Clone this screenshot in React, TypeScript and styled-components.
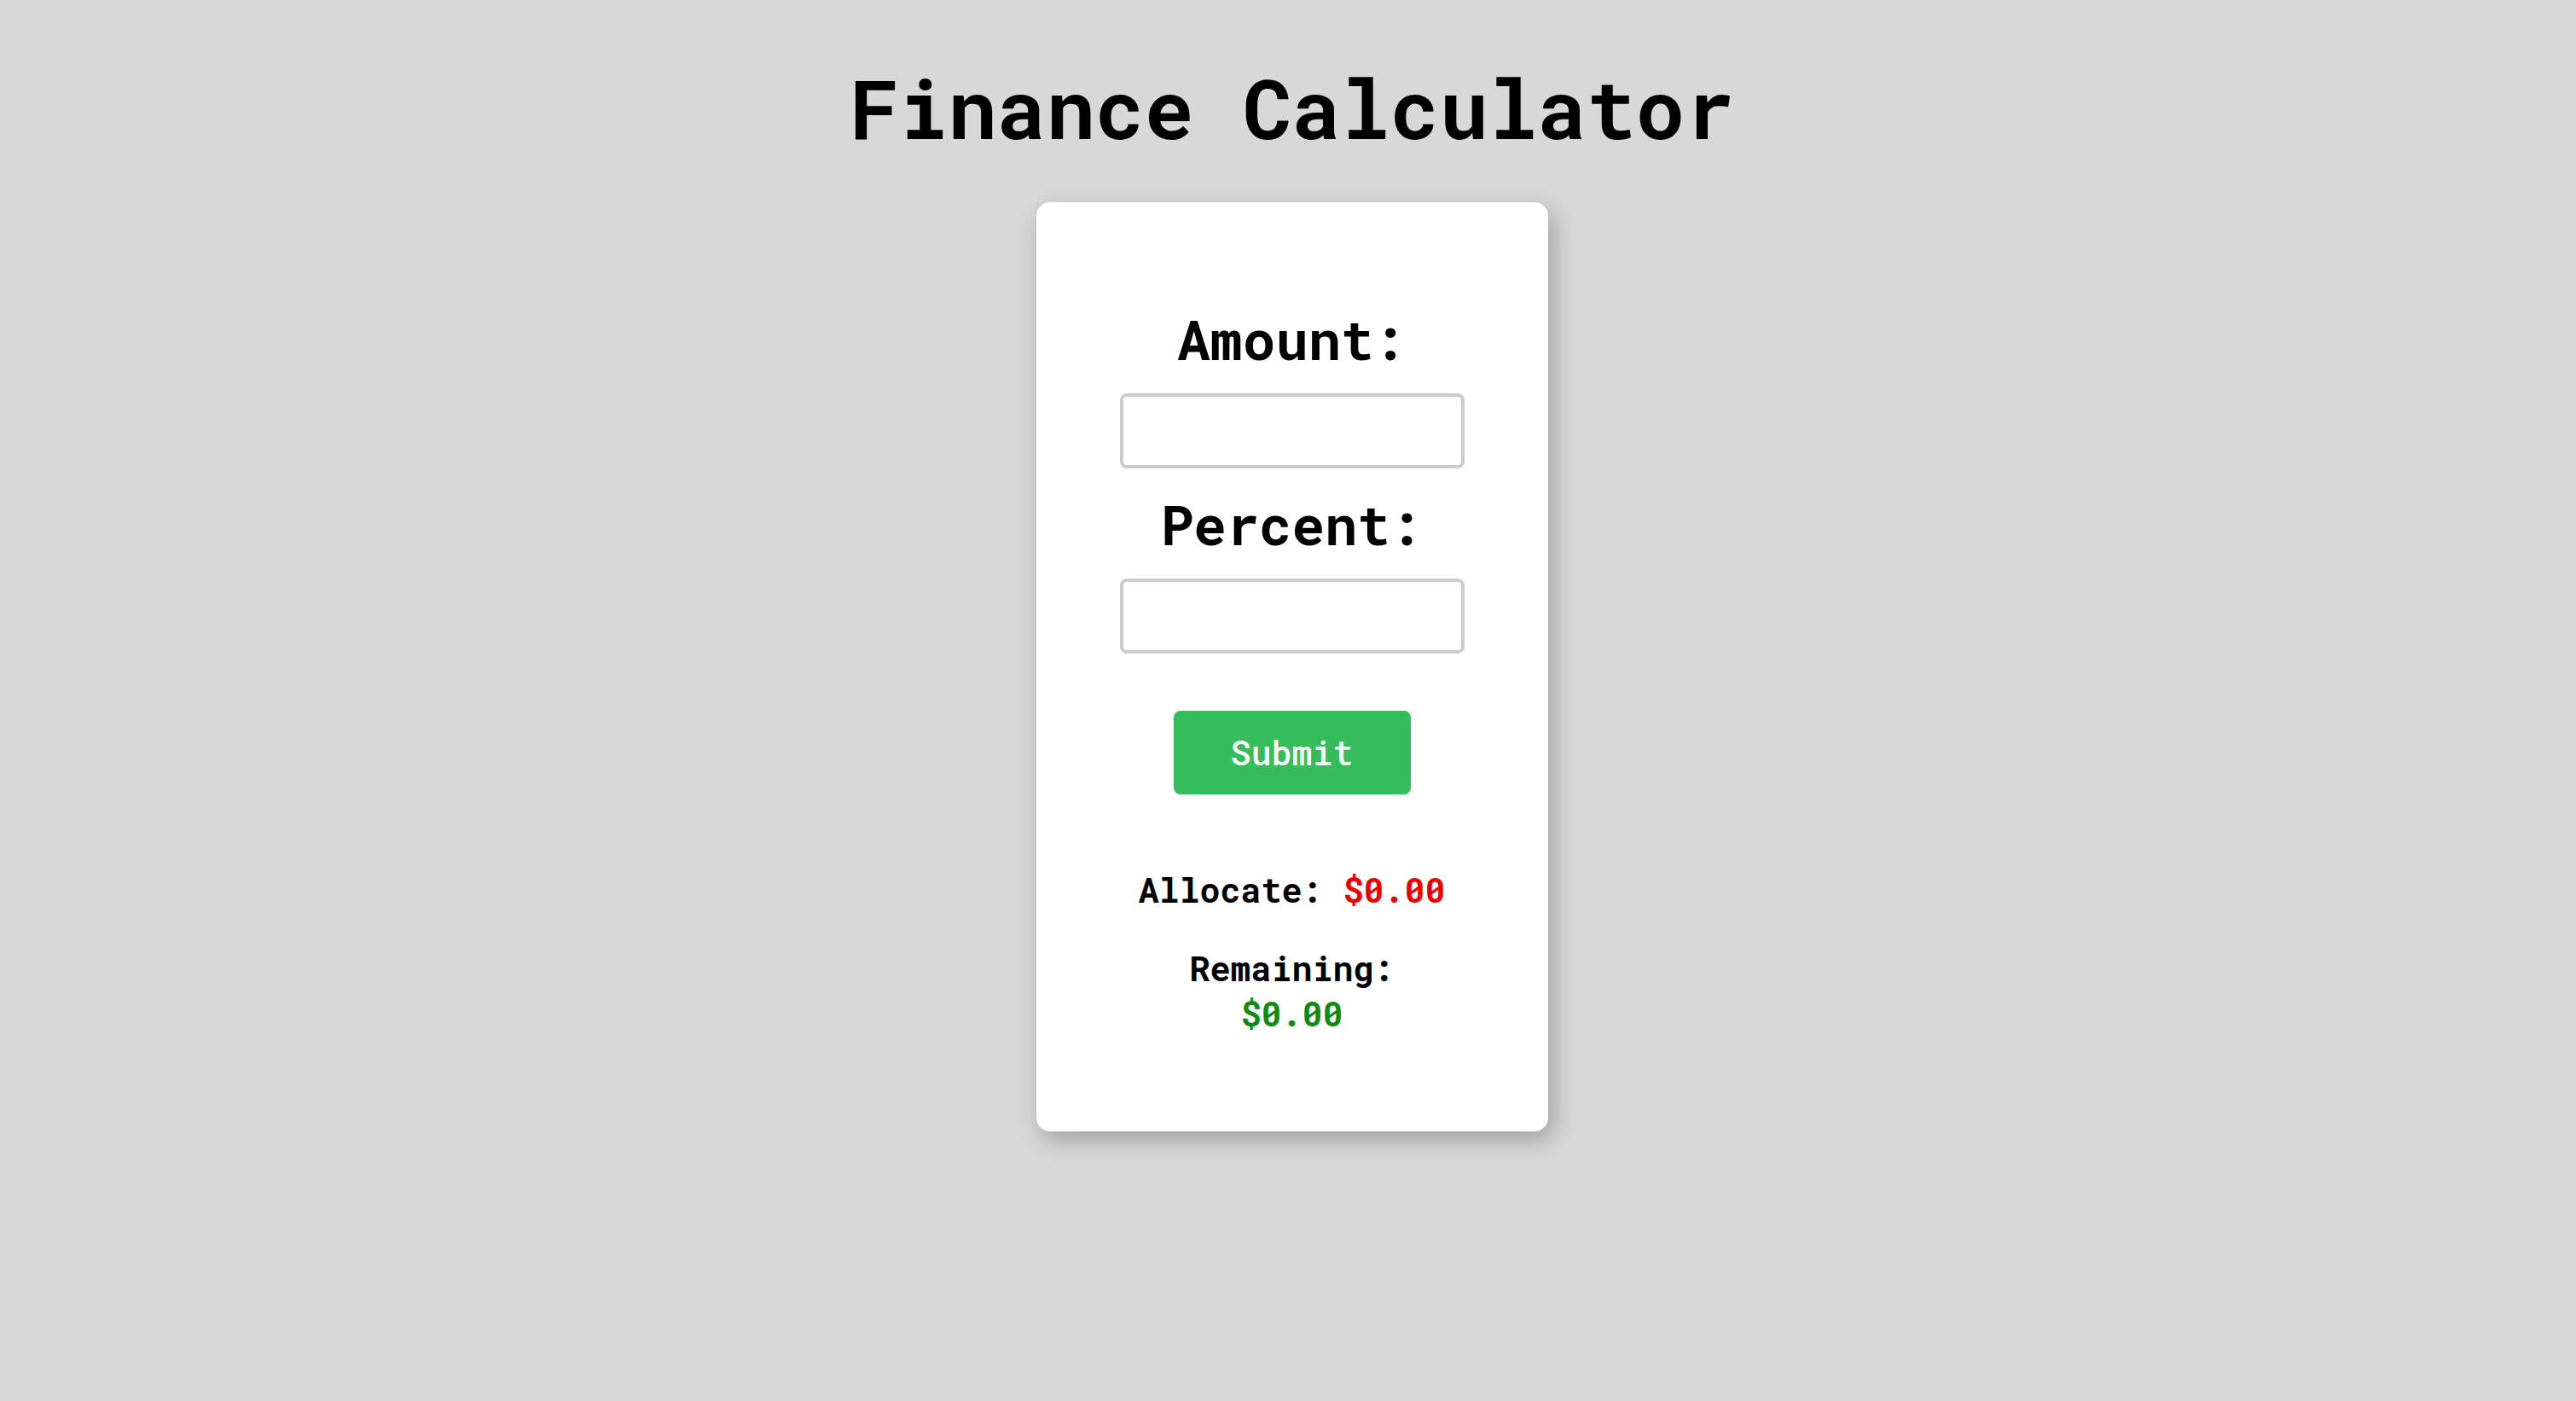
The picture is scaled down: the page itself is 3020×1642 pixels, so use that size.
import React, { useState } from "react";
import styled, { createGlobalStyle } from "styled-components";

const GlobalStyle = createGlobalStyle`
  html, body {
    margin: 0;
    padding: 0;
    background: #d8d8d8;
  }
  body {
    font-family: "Roboto Mono", "DejaVu Sans Mono", "Liberation Mono", monospace;
    color: #000;
  }
  * { box-sizing: border-box; }
`;

const Page = styled.main`
  min-height: 1642px;
  display: flex;
  flex-direction: column;
  align-items: center;
  padding: 68px 0 0 9px;
`;

const Title = styled.h1`
  margin: 0;
  font-size: 96px;
  line-height: 115px;
  font-weight: 700;
`;

const Card = styled.form`
  margin-top: 54px;
  width: 600px;
  padding: 122px 0 112px;
  background: #ffffff;
  border-radius: 16px;
  box-shadow: 6px 10px 28px rgba(0, 0, 0, 0.26);
  display: flex;
  flex-direction: column;
  align-items: center;
`;

const Label = styled.label<{ $gap?: number }>`
  margin-top: ${(p) => p.$gap ?? 0}px;
  font-size: 64px;
  line-height: 76.8px;
  font-weight: 700;
`;

const Input = styled.input`
  margin-top: 25px;
  width: 404px;
  height: 88px;
  border: 4px solid #cccccc;
  border-radius: 8px;
  background: #fff;
  font-family: inherit;
  font-size: 36px;
  padding: 0 16px;
  outline: none;
`;

const SubmitButton = styled.button`
  margin-top: 67px;
  width: 278px;
  height: 98px;
  border: none;
  border-radius: 8px;
  background: #34bd5a;
  color: #ffffff;
  font-family: inherit;
  font-size: 40px;
  font-weight: 500;
  cursor: pointer;
`;

const Result = styled.p<{ $gap: number }>`
  margin: ${(p) => p.$gap}px 0 0;
  max-width: 372px;
  text-align: center;
  font-size: 40px;
  line-height: normal;
  font-weight: 700;
`;

const Money = styled.span<{ $tone: "red" | "green" }>`
  color: ${(p) => (p.$tone === "red" ? "#ee0000" : "#108a10")};
`;

const fmt = (n: number) => `$${(isFinite(n) ? n : 0).toFixed(2)}`;

export default function App() {
  const [amount, setAmount] = useState("");
  const [percent, setPercent] = useState("");
  const [allocate, setAllocate] = useState(0);
  const [remaining, setRemaining] = useState(0);

  const onSubmit = (e: React.FormEvent) => {
    e.preventDefault();
    const a = parseFloat(amount) || 0;
    const p = parseFloat(percent) || 0;
    const alloc = (a * p) / 100;
    setAllocate(alloc);
    setRemaining(a - alloc);
  };

  return (
    <>
      <GlobalStyle />
      <Page>
        <Title>Finance Calculator</Title>
        <Card onSubmit={onSubmit}>
          <Label htmlFor="amount">Amount:</Label>
          <Input id="amount" type="text" value={amount} onChange={(e) => setAmount(e.target.value)} />
          <Label htmlFor="percent" $gap={27}>Percent:</Label>
          <Input id="percent" type="text" value={percent} onChange={(e) => setPercent(e.target.value)} />
          <SubmitButton type="submit">Submit</SubmitButton>
          <Result $gap={85}>
            Allocate: <Money $tone="red">{fmt(allocate)}</Money>
          </Result>
          <Result $gap={39}>
            Remaining: <Money $tone="green">{fmt(remaining)}</Money>
          </Result>
        </Card>
      </Page>
    </>
  );
}
